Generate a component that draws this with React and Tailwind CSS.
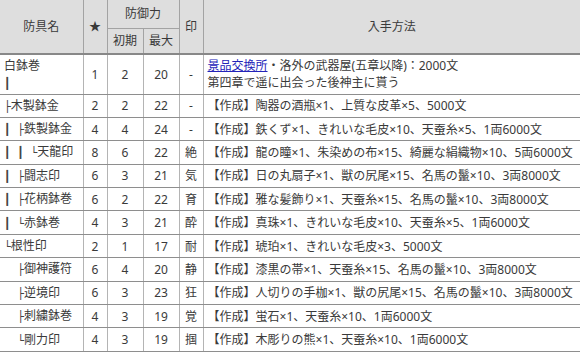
const rows = [
  { tree: "├", name: "木製鉢金", star: 2, init: 2, max: 22, mark: "-", how: "【作成】陶器の酒瓶×1、上質な皮革×5、5000文" },
  { tree: "┃ ├", name: "鉄製鉢金", star: 4, init: 4, max: 24, mark: "-", how: "【作成】鉄くず×1、きれいな毛皮×10、天蚕糸×5、1両6000文" },
  { tree: "┃ ┃ └", name: "天龍印", star: 8, init: 6, max: 22, mark: "絶", how: "【作成】龍の瞳×1、朱染めの布×15、綺麗な絹織物×10、5両6000文" },
  { tree: "┃ ├", name: "闘志印", star: 6, init: 3, max: 21, mark: "気", how: "【作成】日の丸扇子×1、獣の尻尾×15、名馬の鬣×10、3両8000文" },
  { tree: "┃ ├", name: "花柄鉢巻", star: 6, init: 2, max: 22, mark: "育", how: "【作成】雅な髪飾り×1、天蚕糸×15、名馬の鬣×10、3両8000文" },
  { tree: "┃ └", name: "赤鉢巻", star: 4, init: 3, max: 21, mark: "酔", how: "【作成】真珠×1、きれいな毛皮×10、天蚕糸×5、1両6000文" },
  { tree: "└", name: "根性印", star: 2, init: 1, max: 17, mark: "耐", how: "【作成】琥珀×1、きれいな毛皮×3、5000文" },
  { tree: "  ├", name: "御神護符", star: 6, init: 4, max: 20, mark: "静", how: "【作成】漆黒の帯×1、天蚕糸×15、名馬の鬣×10、3両8000文" },
  { tree: "  ├", name: "逆境印", star: 6, init: 3, max: 23, mark: "狂", how: "【作成】人切りの手枷×1、獣の尻尾×15、名馬の鬣×10、3両8000文" },
  { tree: "  ├", name: "刺繍鉢巻", star: 4, init: 3, max: 19, mark: "覚", how: "【作成】蛍石×1、天蚕糸×10、1両6000文" },
  { tree: "  └", name: "剛力印", star: 4, init: 3, max: 19, mark: "掴", how: "【作成】木彫りの熊×1、天蚕糸×10、1両6000文" },
];

const th = "bg-[#dedede] font-normal border-x border-[#a3a3a3] px-1";
const td = "border border-[#b4b4b4] border-b-[#8e8e8e] px-1 text-center";

function Tree({ s }) {
  return <span className="font-['DejaVu_Sans_Mono',monospace] text-[11px] text-[#444] whitespace-pre">{s}</span>;
}

export default function App() {
  return (
    <div className="w-[580px] h-[355px] overflow-hidden bg-white">
      <table className="w-[580px] table-fixed border-collapse text-[12px] leading-[17px] text-[#3a3a3a] font-['Noto_Sans','Noto_Sans_CJK_JP',sans-serif]">
        <colgroup>
          <col className="w-[83px]" />
          <col className="w-[24px]" />
          <col className="w-[36px]" />
          <col className="w-[36px]" />
          <col className="w-[24px]" />
          <col />
        </colgroup>
        <thead>
          <tr className="h-[28px]">
            <th rowSpan={2} className={`${th} border-l-0 border-b-2 border-b-[#888]`}>防具名</th>
            <th rowSpan={2} className={`${th} border-b-2 border-b-[#888]`}>★</th>
            <th colSpan={2} className={`${th} border-b border-b-[#a3a3a3]`}>防御力</th>
            <th rowSpan={2} className={`${th} border-b-2 border-b-[#888]`}>印</th>
            <th rowSpan={2} className={`${th} border-r-0 border-b-2 border-b-[#888]`}>入手方法</th>
          </tr>
          <tr className="h-[26px]">
            <th className={`${th} border-b-2 border-b-[#888]`}>初期</th>
            <th className={`${th} border-b-2 border-b-[#888]`}>最大</th>
          </tr>
        </thead>
        <tbody>
          <tr className="h-[40px]">
            <td className={`${td} border-l-0 text-left`}>
              白鉢巻
              <br />
              <Tree s="┃" />
            </td>
            <td className={td}>1</td>
            <td className={td}>2</td>
            <td className={td}>20</td>
            <td className={td}>-</td>
            <td className={`${td} border-r-0 text-left whitespace-nowrap`}>
              <a href="#" className="text-[#2323b8] underline">景品交換所</a>・洛外の武器屋(五章以降)：2000文
              <br />
              第四章で遥に出会った後神主に貰う
            </td>
          </tr>
          {rows.map((r) => (
            <tr key={r.name} className="h-[23.4px]">
              <td className={`${td} border-l-0 text-left whitespace-nowrap`}>
                <Tree s={r.tree} />
                {r.name}
              </td>
              <td className={td}>{r.star}</td>
              <td className={td}>{r.init}</td>
              <td className={td}>{r.max}</td>
              <td className={td}>{r.mark}</td>
              <td className={`${td} border-r-0 text-left whitespace-nowrap`}>{r.how}</td>
            </tr>
          ))}
        </tbody>
      </table>
    </div>
  );
}
